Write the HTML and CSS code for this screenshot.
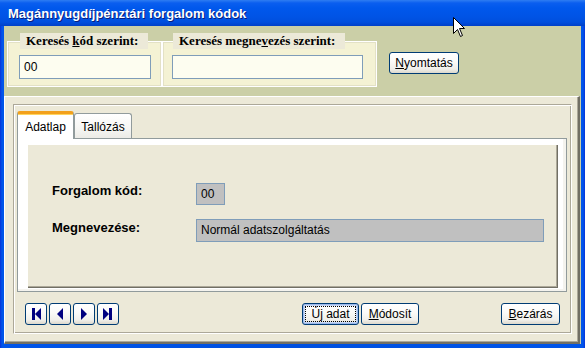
FILE: index.html
```html
<!DOCTYPE html>
<html lang="hu">
<head>
<meta charset="utf-8">
<title>Magánnyugdíjpénztári forgalom kódok</title>
<link rel="stylesheet" href="styles.css">
</head>
<body>
<div class="window">
  <div class="titlebar"><span class="title">Magánnyugdíjpénztári forgalom kódok</span></div>
  <div class="client">
    <div class="search">
      <fieldset class="group g1">
        <legend>Keresés <u>k</u>ód szerint:</legend>
        <div class="input i1">00</div>
      </fieldset>
      <fieldset class="group g2">
        <legend>Keresés megne<u>v</u>ezés szerint:</legend>
        <div class="input i2"></div>
      </fieldset>
      <button class="btn print"><u>N</u>yomtatás</button>
    </div>
    <div class="main">
      <div class="frame">
        <div class="tabs">
          <div class="tab active">Adatlap</div>
          <div class="tab">Tallózás</div>
        </div>
        <div class="page">
          <div class="panel">
            <div class="form">
              <div class="label">Forgalom kód:</div>
              <div class="field code">00</div>
              <div class="label l2">Megnevezése:</div>
              <div class="field name">Normál adatszolgáltatás</div>
            </div>
          </div>
        </div>
        <div class="actions">
          <div class="nav">
            <button class="btn navbtn"><svg width="20" height="20" viewBox="0 0 20 20"><rect x="6" y="4" width="3" height="12" fill="#000080"/><polygon points="15,4 15,16 9,10" fill="#000080"/></svg></button>
            <button class="btn navbtn"><svg width="20" height="20" viewBox="0 0 20 20"><polygon points="13,4 13,16 7,10" fill="#000080"/></svg></button>
            <button class="btn navbtn"><svg width="20" height="20" viewBox="0 0 20 20"><polygon points="7,4 7,16 13,10" fill="#000080"/></svg></button>
            <button class="btn navbtn"><svg width="20" height="20" viewBox="0 0 20 20"><polygon points="5,4 5,16 11,10" fill="#000080"/><rect x="11" y="4" width="3" height="12" fill="#000080"/></svg></button>
          </div>
          <button class="btn newbtn"><span class="focus">Új adat</span></button>
          <button class="btn modbtn"><u>M</u>ódosít</button>
          <button class="btn closebtn"><u>B</u>ezárás</button>
        </div>
      </div>
    </div>
  </div>
  <svg class="cursor" width="14" height="22" viewBox="0 0 14 22"><path d="M0.5,0.5 L0.5,16.5 L4.5,12.5 L7.5,19.5 L9.5,18.5 L6.5,11.5 L11.5,11.5 Z" fill="#fff" stroke="#000" stroke-width="1"/></svg>
</div>
</body>
</html>
```
FILE: styles.css
```css
* { box-sizing: border-box; }
html, body { margin: 0; padding: 0; }
body {
  width: 585px;
  height: 348px;
  overflow: hidden;
  font-family: "Liberation Sans", Arial, sans-serif;
  font-size: 12px;
  color: #000;
}
.window {
  position: relative;
  width: 585px;
  height: 348px;
  display: flex;
  flex-direction: column;
  padding: 0 4px 4px 4px;
  background: linear-gradient(to right, #0831D9 0, #0055EA 2px, #0050E0 50%, #0055EA calc(100% - 2px), #0831D9 100%);
}
.titlebar {
  height: 26px;
  margin: 0 -4px;
  padding-left: 8px;
  display: flex;
  align-items: center;
  background: linear-gradient(to bottom, #2E7DF2 0, #0A5EEF 3px, #0058EC 8px, #0054E6 16px, #004FDE 22px, #0040C8 26px);
}
.title {
  color: #fff;
  font-weight: bold;
  font-size: 13px;
  text-shadow: 1px 1px 0 #0A1E7A;
  padding-top: 1px;
}
.client {
  flex: 1;
  display: flex;
  flex-direction: column;
  background: #CBCFA7;
}
.search {
  height: 70px;
  display: flex;
  align-items: flex-start;
  padding: 7px 0 0 3px;
}
.group {
  margin: 0;
  height: 54px;
  border: 1px solid #fff;
  box-shadow: inset 0 0 0 1px #E3E1C6;
  background: #F4F2D4;
  min-width: 0;
}
.g1 { width: 155px; padding: 0 10px 0 11px; }
.g2 { width: 215px; padding: 0 11px 0 10px; }
.group legend {
  font-family: "Liberation Serif", "Times New Roman", serif;
  font-weight: bold;
  font-size: 13px;
  line-height: 16px;
  height: 16px;
  padding: 0 10px 0 6px;
  background: #ECE9D8;
}
.g1 legend { margin-left: 1px; }
.input {
  margin-top: 6px;
  height: 24px;
  border: 1px solid #7F9DB9;
  background: #FDFDF0;
  padding-left: 4px;
  line-height: 22px;
  font-size: 12px;
}
.i1 { width: 132px; }
.i2 { width: 191px; margin-left: -1px; }
.btn {
  font-family: "Liberation Sans", Arial, sans-serif;
  font-size: 12px;
  color: #000;
  height: 22px;
  padding: 0;
  border: 1px solid #003C74;
  border-radius: 3px;
  background: linear-gradient(to bottom, #FFFFFF 0%, #FBFBF9 40%, #F0EFEA 80%, #DCD8CC 100%);
  display: flex;
  align-items: center;
  justify-content: center;
}
.print {
  width: 70px;
  margin: 19px 0 0 12px;
}
.main {
  flex: 1;
  margin-right: 1px;
  background: #ECE9D8;
  border-top: 1px solid #fff;
  border-left: 1px solid #fff;
  border-right: 2px solid #716F64;
  border-bottom: 2px solid #716F64;
  box-shadow: inset -1px -1px 0 #ACA899;
  padding: 7px 6px 0 8px;
}
.frame {
  border: 1px solid;
  border-color: #ACA899 #fff #fff #ACA899;
  box-shadow: inset 1px 1px 0 #fff, inset -1px -1px 0 #ACA899;
  padding: 6px 4px 8px 3px;
}
.tabs {
  display: flex;
  align-items: flex-end;
  height: 27px;
}
.tab {
  height: 25px;
  border: 1px solid #919B9C;
  border-bottom: none;
  border-radius: 3px 3px 0 0;
  background: linear-gradient(to bottom, #FFFFFF 0%, #F6F6F3 60%, #ECEBE6 100%);
  display: flex;
  align-items: center;
  justify-content: center;
  font-size: 12px;
  padding-top: 1px;
}
.tab.active {
  position: relative;
  z-index: 1;
  width: 57px;
  height: 28px;
  margin-bottom: -1px;
  background: #fff;
  border-top: 3px solid #F2A01C;
  box-shadow: inset 0 1px 0 #FFD45E;
  padding-top: 0;
}
.tab:not(.active) { width: 58px; }
.page {
  height: 154px;
  border: 1px solid #919B9C;
  background: #fff;
  box-shadow: inset -3px -2px 0 #F4F3EE;
  padding: 6px 8px 3px 10px;
}
.panel {
  height: 143px;
  background: #ECE9D8;
  border-right: 1px solid #716F64;
  border-bottom: 1px solid #716F64;
  box-shadow: inset -1px -1px 0 #ACA899;
  padding: 38px 0 0 24px;
}
.form {
  display: grid;
  grid-template-columns: 144px auto;
  row-gap: 14px;
  align-items: start;
  justify-items: start;
}
.label {
  font-weight: bold;
  font-size: 13px;
  line-height: 15px;
  padding-top: 0;
}
.l2 { padding-top: 1px; }
.field {
  background: #C0C0C0;
  border: 1px solid #7F9DB9;
  font-size: 12px;
  padding-left: 4px;
}
.code { width: 29px; height: 22px; line-height: 20px; }
.name { width: 348px; height: 23px; line-height: 21px; }
.actions {
  display: flex;
  align-items: center;
  margin-top: 11px;
  padding-left: 8px;
}
.nav { display: flex; gap: 2px; }
.navbtn { width: 22px; }
.navbtn svg { display: block; }
.newbtn {
  width: 57px;
  margin-left: 183px;
  box-shadow: inset 0 0 0 1px #9DB9EB, inset 0 0 0 2px #C6D8F6;
}
.focus {
  width: 51px;
  height: 16px;
  border: 1px dotted #000;
  display: flex;
  align-items: center;
  justify-content: center;
}
.modbtn { width: 58px; margin-left: 2px; }
.closebtn { width: 59px; margin-left: auto; margin-right: 7px; }
.cursor {
  position: absolute;
  left: 453px;
  top: 17px;
}
```
